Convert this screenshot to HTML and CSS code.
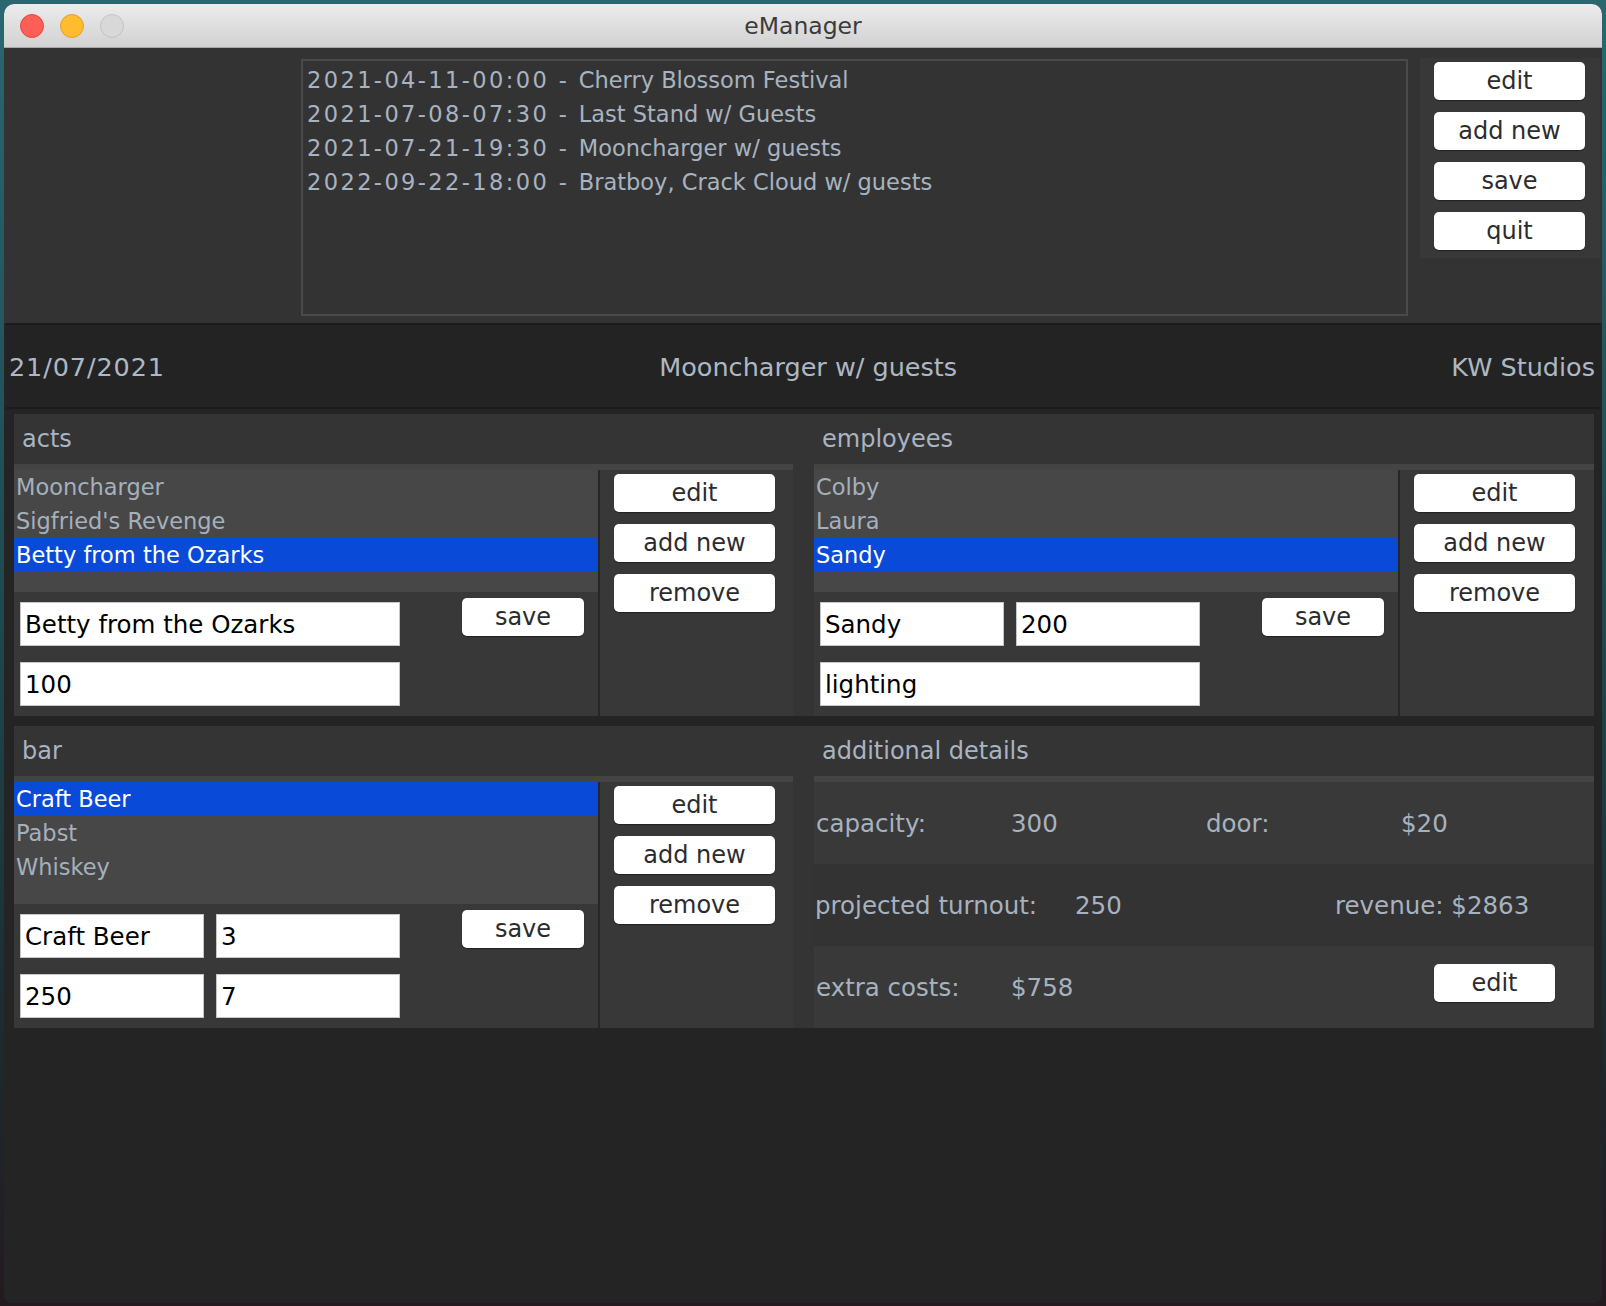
FILE: index.html
```html
<!DOCTYPE html>
<html lang="en">
<head>
<meta charset="utf-8">
<title>eManager</title>
<link rel="stylesheet" href="styles.css">
</head>
<body>
<div class="window">
  <div class="titlebar">
    <div class="lights">
      <span class="light red"></span>
      <span class="light yellow"></span>
      <span class="light gray"></span>
    </div>
    <div class="title">eManager</div>
    <div></div>
  </div>

  <div class="top">
    <div class="events">
      <div class="event"><span class="stamp">2021-04-11-00:00 - </span>Cherry Blossom Festival</div>
      <div class="event"><span class="stamp">2021-07-08-07:30 - </span>Last Stand w/ Guests</div>
      <div class="event"><span class="stamp">2021-07-21-19:30 - </span>Mooncharger w/ guests</div>
      <div class="event"><span class="stamp">2022-09-22-18:00 - </span>Bratboy, Crack Cloud w/ guests</div>
    </div>
    <div class="main-actions">
      <button class="btn btn-main">edit</button>
      <button class="btn btn-main">add new</button>
      <button class="btn btn-main">save</button>
      <button class="btn btn-main">quit</button>
    </div>
  </div>

  <div class="header">
    <span class="date">21/07/2021</span>
    <span>Mooncharger w/ guests</span>
    <span>KW Studios</span>
  </div>

  <div class="grid">
    <div class="row">
      <section class="panel">
        <div class="panel-title">acts</div>
        <div class="strip"></div>
        <div class="panel-body">
          <div class="left">
            <ul class="list">
              <li>Mooncharger</li>
              <li>Sigfried's Revenge</li>
              <li class="selected">Betty from the Ozarks</li>
            </ul>
            <div class="form">
              <div class="fields">
                <div class="field-row"><div class="field">Betty from the Ozarks</div></div>
                <div class="field-row"><div class="field">100</div></div>
              </div>
              <button class="btn btn-save">save</button>
            </div>
          </div>
          <div class="vline"></div>
          <div class="actions">
            <button class="btn btn-side">edit</button>
            <button class="btn btn-side">add new</button>
            <button class="btn btn-side">remove</button>
          </div>
        </div>
      </section>
      <div class="gutter"></div>
      <section class="panel">
        <div class="panel-title">employees</div>
        <div class="strip"></div>
        <div class="panel-body">
          <div class="left">
            <ul class="list">
              <li>Colby</li>
              <li>Laura</li>
              <li class="selected">Sandy</li>
            </ul>
            <div class="form">
              <div class="fields">
                <div class="field-row"><div class="field">Sandy</div><div class="field">200</div></div>
                <div class="field-row"><div class="field">lighting</div></div>
              </div>
              <button class="btn btn-save">save</button>
            </div>
          </div>
          <div class="vline"></div>
          <div class="actions">
            <button class="btn btn-side">edit</button>
            <button class="btn btn-side">add new</button>
            <button class="btn btn-side">remove</button>
          </div>
        </div>
      </section>
    </div>

    <div class="row">
      <section class="panel">
        <div class="panel-title">bar</div>
        <div class="strip"></div>
        <div class="panel-body">
          <div class="left">
            <ul class="list">
              <li class="selected">Craft Beer</li>
              <li>Pabst</li>
              <li>Whiskey</li>
            </ul>
            <div class="form">
              <div class="fields">
                <div class="field-row"><div class="field">Craft Beer</div><div class="field">3</div></div>
                <div class="field-row"><div class="field">250</div><div class="field">7</div></div>
              </div>
              <button class="btn btn-save">save</button>
            </div>
          </div>
          <div class="vline"></div>
          <div class="actions">
            <button class="btn btn-side">edit</button>
            <button class="btn btn-side">add new</button>
            <button class="btn btn-side">remove</button>
          </div>
        </div>
      </section>
      <div class="gutter"></div>
      <section class="panel">
        <div class="panel-title">additional details</div>
        <div class="strip"></div>
        <div class="details-body">
          <div class="drow c4 alt">
            <span>capacity:</span><span>300</span><span>door:</span><span>$20</span>
          </div>
          <div class="drow c3 plain">
            <span>projected turnout:</span><span>250</span><span>revenue: $2863</span>
          </div>
          <div class="drow c4 alt">
            <span>extra costs:</span><span>$758</span><span></span><button class="btn details-edit">edit</button>
          </div>
        </div>
      </section>
    </div>
  </div>
</div>
</body>
</html>
```

FILE: styles.css
```css
* { box-sizing: border-box; }

html, body {
  margin: 0;
  height: 100%;
}

body {
  overflow: hidden;
  font-family: "DejaVu Sans", "Noto Sans", sans-serif;
  background: linear-gradient(180deg, #2b6671 0%, #1f4a52 45%, #1c2a2e 80%, #241a20 100%);
}

.window {
  margin: 4px 4px 0 4px;
  width: 1598px;
  height: 1299px;
  background: #242424;
  border-radius: 10px 10px 8px 8px;
  overflow: hidden;
  display: flex;
  flex-direction: column;
}

/* title bar */
.titlebar {
  flex: none;
  height: 44px;
  display: grid;
  grid-template-columns: 1fr auto 1fr;
  align-items: center;
  background: linear-gradient(180deg, #ececec 0%, #dcdcdc 60%, #d2d2d2 100%);
  border-bottom: 1px solid #a8a8a8;
}

.lights {
  display: flex;
  gap: 16px;
  padding-left: 16px;
}

.light {
  width: 24px;
  height: 24px;
  border-radius: 50%;
}

.red { background: #fd5f57; border: 1px solid #df4a44; }
.yellow { background: #febc2e; border: 1px solid #dfa026; }
.gray { background: #d8d8d8; border: 1px solid #c3c3c3; }

.title {
  font-size: 23.5px;
  color: #3b3b3b;
}

/* top section */
.top {
  flex: none;
  height: 275px;
  background: #333333;
  display: flex;
  align-items: flex-start;
  padding: 10px 0 0 297px;
}

.events {
  width: 1107px;
  height: 257px;
  margin-top: 1px;
  border: 2px solid #4a4a4a;
  background: #333333;
  padding: 2px 0 0 4px;
}

.event {
  height: 34px;
  line-height: 34px;
  font-size: 22.5px;
  color: #a8b3c1;
  white-space: nowrap;
}

.stamp { letter-spacing: 2.4px; }

.main-actions {
  margin-left: 12px;
  width: 180px;
  height: 200px;
  background: #383838;
  padding: 4px 0 0 14px;
  display: flex;
  flex-direction: column;
  gap: 12px;
}

.btn {
  height: 38px;
  flex: none;
  background: #ffffff;
  border: none;
  border-radius: 5px;
  font-family: inherit;
  font-size: 24px;
  color: #2c2c2c;
  padding: 0;
  box-shadow: 0 1px 1px rgba(0, 0, 0, 0.4);
  display: flex;
  align-items: center;
  justify-content: center;
}

.btn-main { width: 151px; }
.btn-side { width: 161px; }
.btn-save { width: 122px; margin-left: 62px; }

/* header */
.header {
  flex: none;
  height: 86px;
  margin: 0 2px;
  background: #232323;
  border-top: 2px solid #1b1b1b;
  border-bottom: 2px solid #1b1b1b;
  display: flex;
  justify-content: space-between;
  align-items: center;
  padding: 2px 5px 0 3px;
  font-size: 25.5px;
  color: #adb8c5;
}

.date { letter-spacing: 0.9px; }

/* panels grid */
.grid {
  padding: 5px 8px 0 10px;
  display: flex;
  flex-direction: column;
  gap: 10px;
}

.row {
  height: 302px;
  display: grid;
  grid-template-columns: 779px 21px 780px;
  background: #343434;
}

.panel {
  display: flex;
  flex-direction: column;
}

.panel-title {
  height: 50px;
  padding-left: 8px;
  display: flex;
  align-items: center;
  font-size: 24px;
  color: #a9b4c2;
}

.strip {
  height: 6px;
  background: #444444;
}

.panel-body {
  height: 246px;
  display: grid;
  grid-template-columns: 584px 2px 1fr;
}

.left {
  display: flex;
  flex-direction: column;
}

.list {
  height: 122px;
  margin: 0;
  padding: 0;
  list-style: none;
  background: #474747;
}

.list li {
  height: 34px;
  line-height: 34px;
  padding-left: 2px;
  font-size: 22.5px;
  color: #a5b0bd;
  white-space: nowrap;
}

.list li.selected {
  background: #0a4ad8;
  color: #ffffff;
}

.form {
  height: 124px;
  background: #383838;
  display: flex;
  align-items: flex-start;
  padding: 6px 0 0 6px;
}

.fields {
  width: 380px;
  margin-top: 4px;
  display: flex;
  flex-direction: column;
  gap: 16px;
}

.field-row {
  display: flex;
  gap: 12px;
}

.field {
  flex: 1;
  height: 44px;
  background: #ffffff;
  border: 1px solid #c6c6c6;
  padding-left: 4px;
  display: flex;
  align-items: center;
  font-size: 24.5px;
  color: #000000;
  white-space: nowrap;
  overflow: hidden;
}

.vline { background: #262626; }

.actions {
  background: #383838;
  padding: 4px 0 0 14px;
  display: flex;
  flex-direction: column;
  gap: 12px;
}

/* additional details */
.details-body {
  height: 246px;
  display: flex;
  flex-direction: column;
}

.drow {
  height: 82px;
  display: grid;
  align-items: center;
  font-size: 24.5px;
  color: #a7b2bf;
  white-space: nowrap;
}

.drow.c4 {
  grid-template-columns: repeat(4, 195px);
  padding-left: 2px;
}

.drow.c3 {
  grid-template-columns: repeat(3, 260px);
  padding-left: 1px;
}

.drow.alt { background: #393939; }
.drow.plain { background: #333333; }

.details-edit {
  justify-self: start;
  width: 121px;
  margin: -8px 0 0 33px;
}
```
